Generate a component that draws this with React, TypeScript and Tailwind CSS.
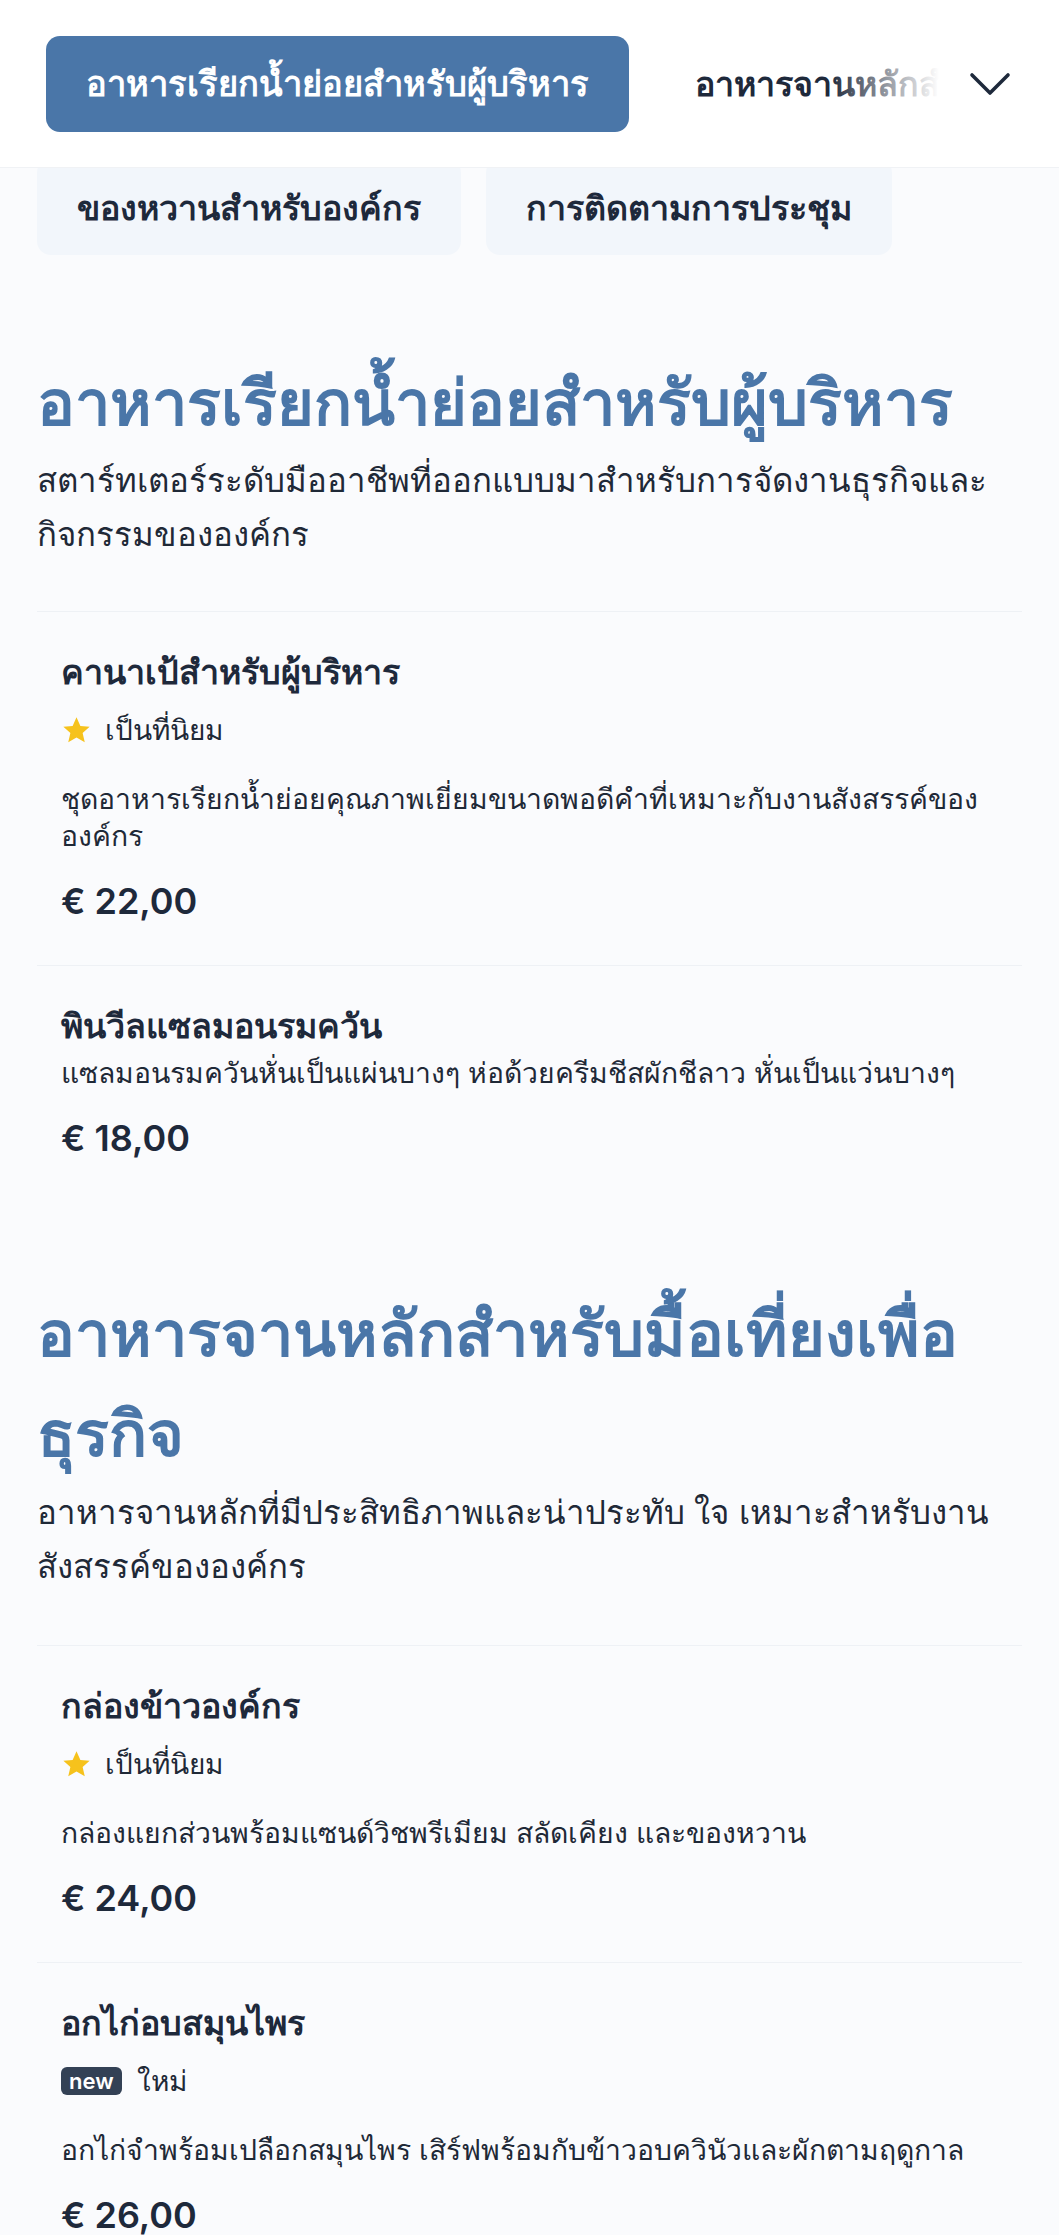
import React from "react";

const FONT = { fontFamily: '"Inter", "Noto Sans", sans-serif' };

function Star() {
  return (
    <svg width="31" height="30" viewBox="0 0 24 24" className="shrink-0">
      <path d="M12 1.8l3.1 6.9 7.4.7-5.6 5 1.7 7.4L12 17.9l-6.6 3.9 1.7-7.4-5.6-5 7.4-.7z" fill="#f6c21c" />
    </svg>
  );
}

type Item = { title: string; badge?: "popular" | "new"; desc: string; price: string };

function MenuItem({ item }: { item: Item }) {
  return (
    <div className="border-t border-[#eef1f5] px-6 pt-[38px] pb-[42px]">
      <div className="text-[34px] font-bold text-[#1e293b] leading-[44px]">{item.title}</div>
      {item.badge === "popular" && (
        <div className="flex items-center gap-[13px] mt-[16px] text-[28px] text-[#1f2937] leading-[40px]">
          <Star />
          <span>เป็นที่นิยม</span>
        </div>
      )}
      {item.badge === "new" && (
        <div className="flex items-center gap-[15px] mt-[16px] text-[28px] text-[#1f2937] leading-[40px]">
          <span className="bg-[#334155] text-white text-[22px] leading-[28px] px-[8px] rounded-[6px] font-semibold">new</span>
          <span>ใหม่</span>
        </div>
      )}
      <div className={`text-[28.3px] text-[#1f2937] leading-[37px] ${item.badge ? "mt-[31px]" : "mt-[7px]"}`}>{item.desc}</div>
      <div className="text-[36px] font-semibold text-[#1e293b] mt-[24px] leading-[44px]">{item.price}</div>
    </div>
  );
}

function Section({ title, sub, items, first }: { title: string; sub: string; items: Item[]; first?: boolean }) {
  return (
    <section className={first ? "mt-[97px]" : "mt-[81px]"}>
      <h2 className="text-[63px] font-bold text-[#4a76a8] leading-[100px]">{title}</h2>
      <p className={`text-[33px] text-[#1f2937] leading-[54px] ${first ? "mt-[1px] mb-[50px]" : "mt-[2px] mb-[52px]"}`}>{sub}</p>
      <div>
        {items.map((it, i) => (
          <MenuItem key={i} item={it} />
        ))}
      </div>
    </section>
  );
}

export default function App() {
  return (
    <div className="min-h-[2235px] bg-[#fafbfd] overflow-hidden" style={FONT}>
      <header className="relative z-10 h-[168px] bg-white flex items-center border-b border-[#f0f2f5]">
        <div className="relative flex-1 overflow-hidden pl-[46px]">
          <div className="flex items-center gap-[66px] whitespace-nowrap">
            <div className="h-[96px] px-10 rounded-[14px] bg-[#4a76a8] text-white text-[34.5px] font-bold flex items-center">
              อาหารเรียกน้ำย่อยสำหรับผู้บริหาร
            </div>
            <div className="text-[34px] font-bold text-[#1e293b]">อาหารจานหลักสำหรับมื้อเที่ยงเพื่อธุรกิจ</div>
          </div>
          <div className="absolute right-0 top-0 bottom-0 w-[110px] bg-gradient-to-r from-white/0 to-white" />
        </div>
        <div className="w-[120px] h-full flex items-center justify-center bg-white pr-[18px]">
          <svg width="42" height="24" viewBox="0 0 42 24" fill="none">
            <path d="M3 3l18 18L39 3" stroke="#1e293b" strokeWidth="3.6" strokeLinecap="round" strokeLinejoin="round" />
          </svg>
        </div>
      </header>
      <div className="-mt-[9px] flex gap-[25px] pl-[37px]">
        <div className="h-[96px] px-10 rounded-[14px] bg-[#f2f6fb] text-[34px] font-bold text-[#1e293b] flex items-center">
          ของหวานสำหรับองค์กร
        </div>
        <div className="h-[96px] px-10 rounded-[14px] bg-[#f2f6fb] text-[34px] font-bold text-[#1e293b] flex items-center">
          การติดตามการประชุม
        </div>
      </div>
      <main className="px-[37px]">
        <Section
          first
          title="อาหารเรียกน้ำย่อยสำหรับผู้บริหาร"
          sub="สตาร์ทเตอร์ระดับมืออาชีพที่ออกแบบมาสำหรับการจัดงานธุรกิจและกิจกรรมขององค์กร"
          items={[
            {
              title: "คานาเป้สำหรับผู้บริหาร",
              badge: "popular",
              desc: "ชุดอาหารเรียกน้ำย่อยคุณภาพเยี่ยมขนาดพอดีคำที่เหมาะกับงานสังสรรค์ขององค์กร",
              price: "€ 22,00",
            },
            {
              title: "พินวีลแซลมอนรมควัน",
              desc: "แซลมอนรมควันหั่นเป็นแผ่นบางๆ ห่อด้วยครีมชีสผักชีลาว หั่นเป็นแว่นบางๆ",
              price: "€ 18,00",
            },
          ]}
        />
        <Section
          title="อาหารจานหลักสำหรับมื้อเที่ยงเพื่อธุรกิจ"
          sub="อาหารจานหลักที่มีประสิทธิภาพและน่าประทับ ใจ เหมาะสำหรับงานสังสรรค์ขององค์กร"
          items={[
            {
              title: "กล่องข้าวองค์กร",
              badge: "popular",
              desc: "กล่องแยกส่วนพร้อมแซนด์วิชพรีเมียม สลัดเคียง และของหวาน",
              price: "€ 24,00",
            },
            {
              title: "อกไก่อบสมุนไพร",
              badge: "new",
              desc: "อกไก่จำพร้อมเปลือกสมุนไพร เสิร์ฟพร้อมกับข้าวอบควินัวและผักตามฤดูกาล",
              price: "€ 26,00",
            },
          ]}
        />
      </main>
    </div>
  );
}
